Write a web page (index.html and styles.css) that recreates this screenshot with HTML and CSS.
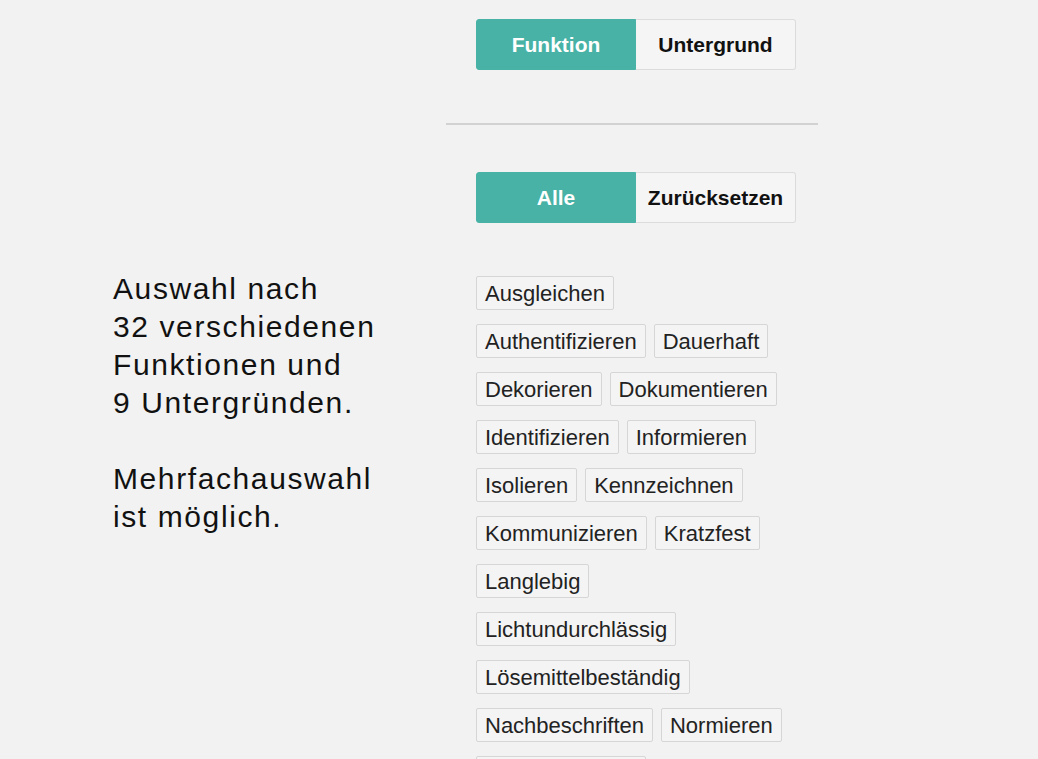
FILE: index.html
```html
<!DOCTYPE html>
<html lang="de">
    <head>
        <title>Auswahl</title>
        <meta charset="utf-8">
        <meta name="viewport" content="width=device-width, initial-scale=1">
        <link rel="stylesheet" href="styles.css">
    </head>
    <body>
        <div class="page">
            <div class="intro">
                <p>Auswahl nach<br>32 verschiedenen<br>Funktionen und<br>9 Untergründen.</p>
                <p>Mehrfachauswahl<br>ist möglich.</p>
            </div>

            <div class="filter">
                <div class="toggle">
                    <button class="btn active" type="button">Funktion</button>
                    <button class="btn" type="button">Untergrund</button>
                </div>

                <hr class="divider">

                <div class="toggle">
                    <button class="btn active" type="button">Alle</button>
                    <button class="btn" type="button">Zurücksetzen</button>
                </div>

                <div class="tags">
                    <span class="tag">Ausgleichen</span>
                    <span class="tag">Authentifizieren</span>
                    <span class="tag">Dauerhaft</span>
                    <span class="tag">Dekorieren</span>
                    <span class="tag">Dokumentieren</span>
                    <span class="tag">Identifizieren</span>
                    <span class="tag">Informieren</span>
                    <span class="tag">Isolieren</span>
                    <span class="tag">Kennzeichnen</span>
                    <span class="tag">Kommunizieren</span>
                    <span class="tag">Kratzfest</span>
                    <span class="tag">Langlebig</span>
                    <span class="tag">Lichtundurchlässig</span>
                    <span class="tag">Lösemittelbeständig</span>
                    <span class="tag">Nachbeschriften</span>
                    <span class="tag">Normieren</span>
                    <span class="tag">Personalisieren</span>
                </div>
            </div>
        </div>
    </body>
</html>
```

FILE: styles.css
```css
* {
    box-sizing: border-box;
}
body {
    margin: 0;
    background-color: #f2f2f2;
    font-family: "Liberation Sans", Arial, sans-serif;
    overflow: hidden;
}
.page {
    display: flex;
    height: 759px;
}
/* Left column with the description */
.intro {
    width: 446px;
    padding: 270px 0 0 113px;
    color: #111;
    font-size: 30px;
    line-height: 38px;
    letter-spacing: 1.6px;
}
.intro p {
    margin: 0 0 38px 0;
}
/* Right column with the filter */
.filter {
    width: 372px;
    padding-top: 19px;
}
.toggle {
    display: flex;
    width: 320px;
    margin-left: 30px;
}
.btn {
    width: 160px;
    height: 51px;
    border: 1px solid #dcdcdc;
    border-left: none;
    border-radius: 0 3px 3px 0;
    background-color: #f5f5f5;
    color: #111;
    font-family: "Liberation Sans", Arial, sans-serif;
    font-size: 21px;
    font-weight: bold;
    padding: 0;
    cursor: pointer;
}
.btn.active {
    border: 1px solid #47b2a5;
    border-radius: 3px 0 0 3px;
    background-color: #47b2a5;
    color: #fff;
}
.divider {
    border: none;
    border-top: 2px solid #d2d2d2;
    margin: 53px 0 47px 0;
}
.tags {
    display: flex;
    flex-wrap: wrap;
    align-items: flex-start;
    gap: 14px 8px;
    width: 312px;
    margin: 53px 0 0 30px;
}
.tag {
    display: inline-block;
    padding: 4px 8px 3px 8px;
    border: 1px solid #d6d6d6;
    border-radius: 2px;
    background-color: #f4f4f4;
    color: #222;
    font-size: 22px;
    line-height: 25px;
}
```
